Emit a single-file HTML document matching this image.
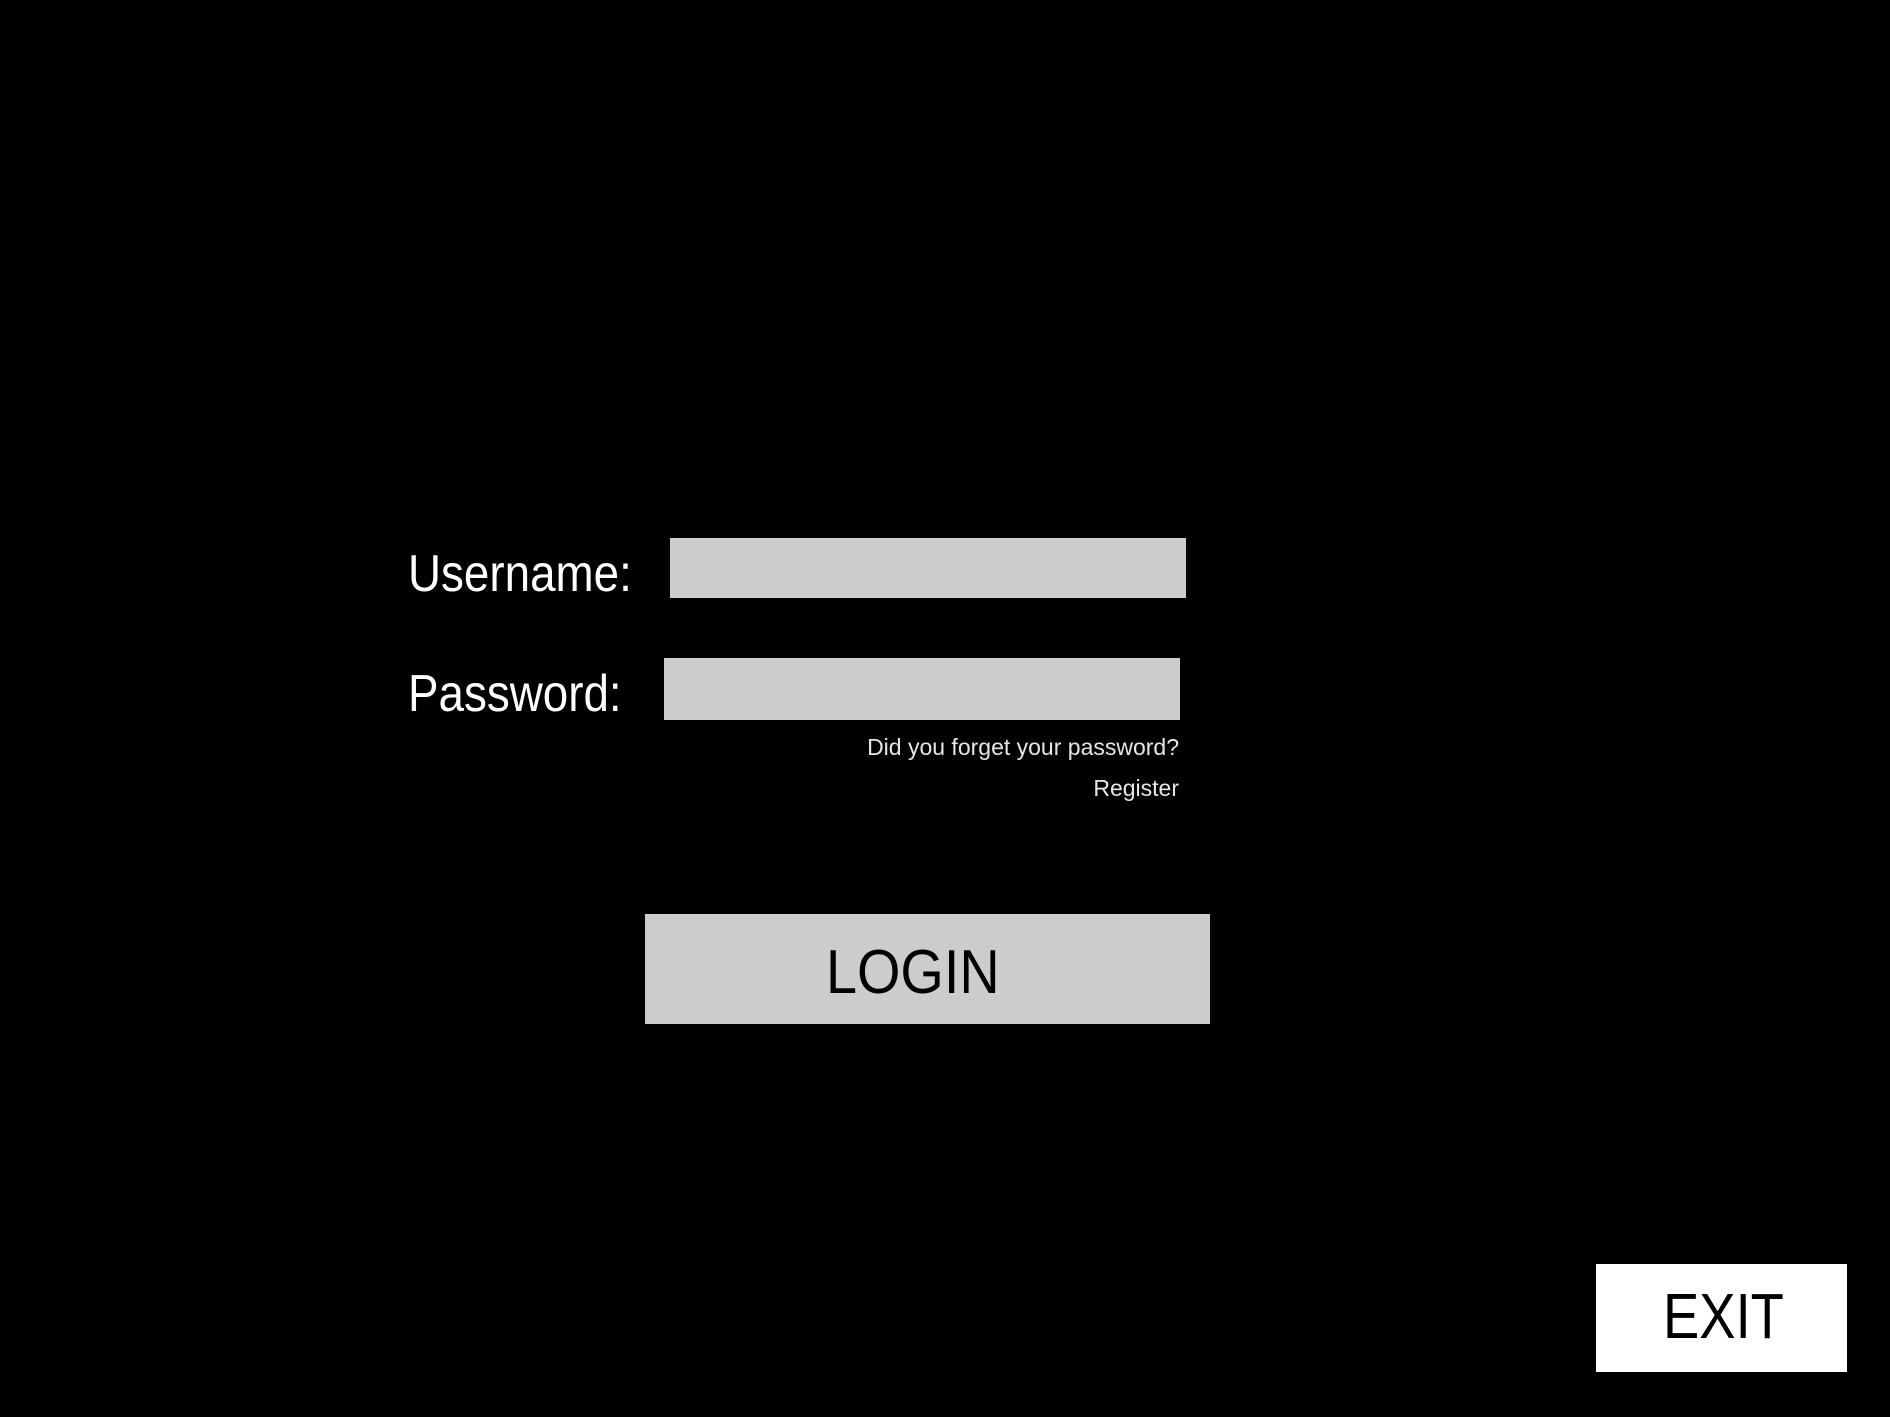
<!DOCTYPE html>
<html><head><meta charset="utf-8"><style>
body{margin:0;width:1890px;height:1417px;background:#000;position:relative;overflow:hidden;font-family:"Liberation Sans",sans-serif}
div{position:absolute}
.lbl{color:#fff;font-size:52px;line-height:1;white-space:nowrap;transform:scaleX(0.88);transform-origin:0 0}
.field{background:#cdcbcc}
.small{color:#e6e6e6;font-size:23px;line-height:1;white-space:nowrap;text-align:right}
</style></head><body>
<div class="lbl" style="left:408px;top:548px">Username:</div>
<div class="field" style="left:670px;top:538px;width:516px;height:60px"></div>
<div class="lbl" style="left:408px;top:668px">Password:</div>
<div class="field" style="left:664px;top:658px;width:516px;height:62px"></div>
<div class="small" style="right:711px;top:736px">Did you forget your password?</div>
<div class="small" style="right:711px;top:777px">Register</div>
<div class="field" style="left:645px;top:914px;width:565px;height:110px"></div>
<div style="left:826px;top:942px;color:#000;font-size:62px;line-height:1;white-space:nowrap;transform:scaleX(0.9);transform-origin:0 0">LOGIN</div>
<div style="left:1596px;top:1264px;width:251px;height:108px;background:#fff"></div>
<div style="left:1663px;top:1284px;color:#000;font-size:64px;line-height:1;white-space:nowrap;transform:scaleX(0.85);transform-origin:0 0">EXIT</div>
</body></html>
